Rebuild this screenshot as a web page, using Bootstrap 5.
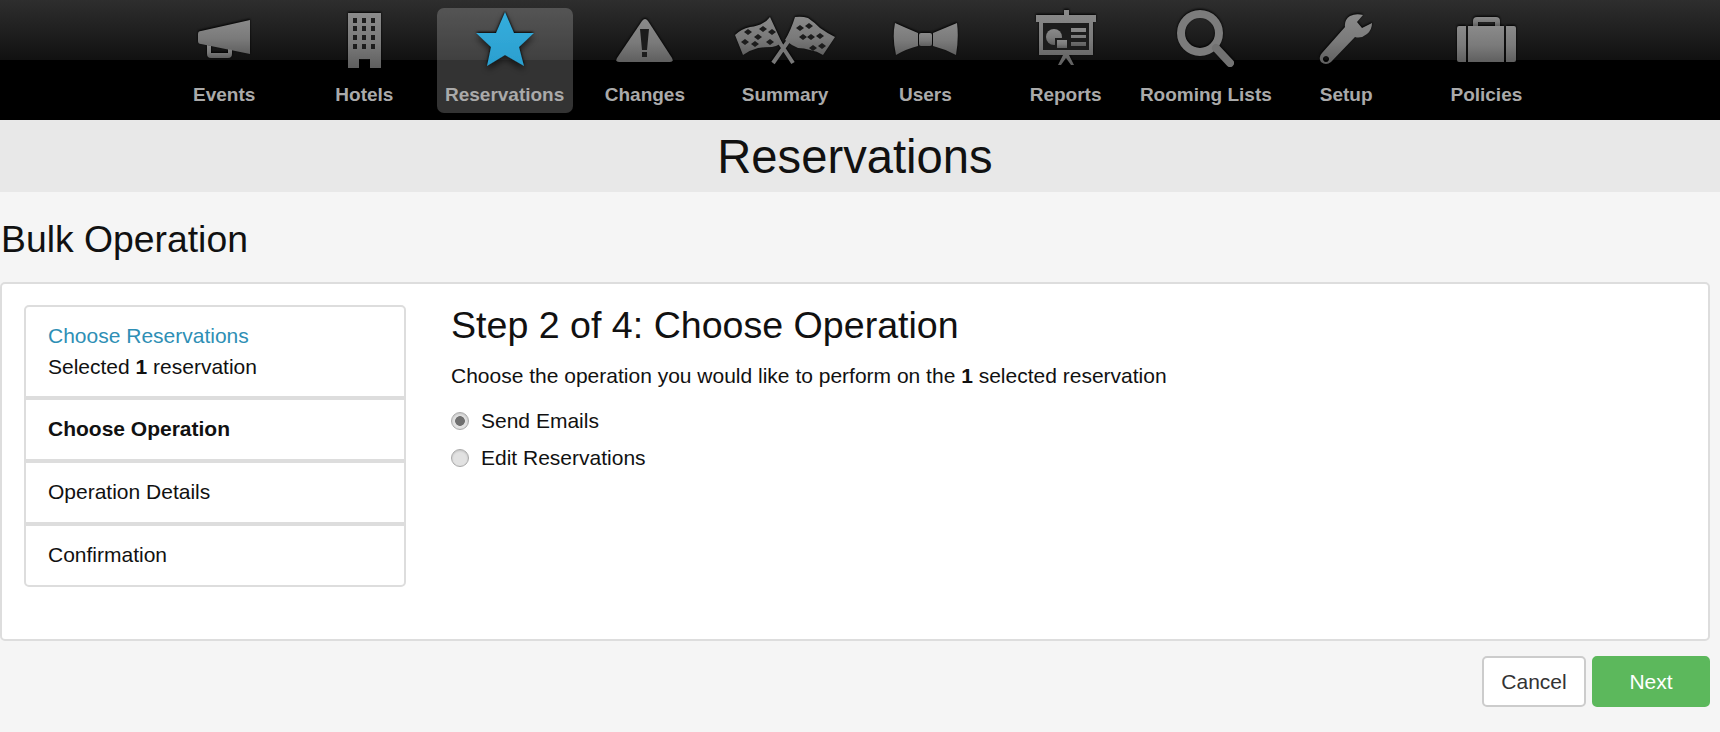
<!DOCTYPE html>
<html lang="en">
<head>
<meta charset="utf-8">
<title>Reservations</title>
<link rel="stylesheet" href="https://cdn.jsdelivr.net/npm/bootstrap@5.3.0/dist/css/bootstrap.min.css">
<script src="https://cdn.jsdelivr.net/npm/bootstrap@5.3.0/dist/js/bootstrap.bundle.min.js"></script>
<style>
html,body{height:732px;overflow:hidden}
body{background:#f5f5f5;color:#111;font-family:"Liberation Sans",Arial,sans-serif;font-size:21px;line-height:30.67px}
.top-nav{height:120px;background:linear-gradient(#2e2e2e 0,#111 60px,#000 60px);padding-left:154px}
.top-link{width:136.25px;height:105px;margin:8px 2px 0;border-radius:7px;color:#aaa;font-size:19px;font-weight:700;text-decoration:none;text-align:center;display:block}
.top-link.is-on{background:rgba(255,255,255,.2)}
.top-link svg{display:block;width:136px;height:72px;filter:blur(.4px) drop-shadow(0 -1px 1px #000);overflow:visible}
.top-link span{display:block;line-height:30px}
.ig{fill:url(#gi)}
.hole{fill:#1c1c1c}
.title-band{height:72px;background:#e8e8e8;padding:1px 10px 0 0;text-align:center;font-size:47.2px;line-height:71px}
.body-wrap{width:1710px}
.page-head{font-size:37.33px;line-height:40px;margin:27px 0 23px 1px;font-weight:400}
.wiz-card{border:2px solid #ddd;border-radius:5px;background:#fff;height:359px;padding:21px 22px}
.wiz-steps{width:382px;flex:none;border:2px solid #ddd;border-radius:5px;align-self:flex-start;background:#fff}
.wiz-steps .list-group-item{border:0;border-bottom:4px solid #ddd;padding:14px 22px;background:transparent;color:#111}
.wiz-steps .list-group-item:last-child{border-bottom:0;padding-bottom:15px}
.done-link{color:#2e8fb5;text-decoration:none;display:block}
.wiz-main{margin-left:45px}
.wiz-title{font-size:37.6px;line-height:40px;margin:0 0 16px;font-weight:400}
.wiz-text{margin:0 0 11px}
.wiz-radio{display:flex;align-items:center;min-height:37px;margin:0;padding:0}
.wiz-radio .form-check-input{float:none;width:18px;height:18px;margin:0 12px 0 0;border:1px solid #aaa;background:#e2e2e2;box-shadow:inset 0 1px 2px rgba(0,0,0,.15)}
.wiz-radio .form-check-input:checked{background:radial-gradient(circle,#707070 0 4.5px,#e2e2e2 5.2px);border-color:#aaa}
.foot-btn{font-size:21px;height:51px;border-radius:5px;line-height:1.3}
.btn-cancel{width:104px;background:#fff;border:2px solid #ccc;color:#333}
.btn-next{width:118px;background:#5cb85c;border:2px solid #5cb85c;color:#fff;margin-left:6px}
.foot-row{margin-top:15px}
</style>
</head>
<body>
<nav class="top-nav d-flex">
  <a class="top-link" href="#"><svg viewBox="-68 8 136 72"><defs><linearGradient id="gi" x1="0" y1="0" x2="0" y2="1"><stop offset="0" stop-color="#8a8a8a"/><stop offset=".55" stop-color="#7a7a7a"/><stop offset="1" stop-color="#5f5f5f"/></linearGradient></defs>
    <path class="ig" d="M-26 34Q-26 31-23 31L26 20V54L-23 44Q-26 44-26 41Z"/><path class="ig" d="M-17 45V54Q-17 58-13 58H4Q8 58 8 54V50L4 49V53H-13V46Z"/></svg><span>Events</span></a>
  <a class="top-link" href="#"><svg viewBox="-68 8 136 72">
    <path class="ig" d="M-16 13H17V68H6V59H-5V68H-16Z"/>
    <path class="hole" d="M-11 18h4v5h-4zM-2 18h4v5h-4zM7 18h4v5h-4zM-11 26h4v5h-4zM-2 26h4v5h-4zM7 26h4v5h-4zM-11 35h4v5h-4zM-2 35h4v5h-4zM7 35h4v5h-4zM-11 44h4v5h-4zM-2 44h4v5h-4zM7 44h4v5h-4z"/></svg><span>Hotels</span></a>
  <a class="top-link is-on" href="#"><svg viewBox="-68 8 136 72">
    <defs><linearGradient id="gs" x1="0" y1="0" x2="0" y2="1"><stop offset="0" stop-color="#35aedd"/><stop offset="1" stop-color="#2b9fcf"/></linearGradient><filter id="fs" x="-30%" y="-30%" width="160%" height="170%"><feDropShadow dx="0" dy="4" stdDeviation="3" flood-color="#000" flood-opacity=".35"/></filter></defs>
    <path fill="url(#gs)" filter="url(#fs)" d="M0 12L9 33H29L14 47L19 66L0 55L-18 66L-14 47L-29 33H-9Z"/></svg><span>Reservations</span></a>
  <a class="top-link" href="#"><svg viewBox="-68 8 136 72">
    <path class="ig" d="M-3 21Q0 17 3 21L27 58Q29 62 25 62H-26Q-30 62-28 58Z"/>
    <path class="hole" d="M-5 29H4L2 50H-3ZM-3 52H2V57H-3Z"/></svg><span>Changes</span></a>
  <a class="top-link" href="#"><svg viewBox="-68 8 136 72">
    <path d="M-12 63L4 40M8 63L-7 40" stroke="#777" stroke-width="4" fill="none"/>
    <path class="ig" d="M-50 35Q-44 29-35 27Q-27 26-22 23Q-18 21-15 17L-3 43Q-8 46-13 47Q-20 47-27 48Q-35 50-42 55Z"/>
    <path class="ig" d="M0 40Q6 30 10 17Q17 16 23 18Q29 22 35 28Q42 33 50 37Q44 46 38 55Q32 51 25 50Q19 48 13 48Q6 45 0 40Z"/>
    <path class="hole" d="M-41 32l4-3 4 3-4 3zM-26 29l4-3 4 3-4 3zM-17 32l4-3 4 3-4 3zM-31 37l4-3 4 3-4 3zM-44 42l4-3 4 3-4 3zM-19 42l4-3 4 3-4 3zM-34 44l4-3 4 3-4 3z"/>
    <path class="hole" d="M11 28l4-3 4 3-4 3zM20 26l4-3 4 3-4 3zM14 37l4-3 4 3-4 3zM22 37l4-3 4 3-4 3zM31 36l4-3 4 3-4 3zM24 48l4-3 4 3-4 3zM33 46l4-3 4 3-4 3z"/></svg><span>Summary</span></a>
  <a class="top-link" href="#"><svg viewBox="-68 8 136 72">
    <path class="ig" d="M-30 23Q-19 28-7 33V46Q-19 49-29 55Q-33 38-30 23Z"/>
    <path class="ig" d="M32 23Q20 28 8 33V46Q20 49 31 55Q34 38 32 23Z"/>
    <rect class="ig" x="-6" y="33" width="13" height="13" rx="2"/></svg><span>Users</span></a>
  <a class="top-link" href="#"><svg viewBox="-68 8 136 72">
    <path class="ig" d="M-2 10H3V15H30V22H27V55H3L8 65H5L0 58L-5 65H-8L-3 55H-27V22H-30V15H-2Z"/>
    <path class="hole" d="M-23 23H23V50H-23Z"/>
    <circle class="ig" cx="-12" cy="37" r="8"/><path class="hole" d="M-11 38H2V49H-11Z"/><path class="ig" d="M-9 40H1V48H-9Z"/>
    <path class="ig" d="M5 28H20V32H5ZM5 35H20V38H5ZM5 42H20V46H5Z"/></svg><span>Reports</span></a>
  <a class="top-link" href="#"><svg viewBox="-68 8 136 72">
    <circle cx="-6" cy="33" r="19" fill="none" stroke="#7c7c7c" stroke-width="8"/>
    <path d="M10 48L24 63" stroke="#727272" stroke-width="8" stroke-linecap="round" fill="none"/></svg><span>Rooming Lists</span></a>
  <a class="top-link" href="#"><svg viewBox="-68 8 136 72">
    <path class="ig" fill-rule="evenodd" d="M-1 27Q-2 20 4 16Q10 13 17 15L11 22L16 28L26 23Q26 30 21 34Q15 39 9 37L-15 62Q-20 66-25 62Q-28 57-24 53ZM-20 56a3 3 0 1 0 .01 0Z"/></svg><span>Setup</span></a>
  <a class="top-link" href="#"><svg viewBox="-68 8 136 72">
    <path class="ig" fill-rule="evenodd" d="M-13 26V21Q-13 17-9 17H10Q14 17 14 21V26ZM-8 26H9V22H-8Z"/>
    <path class="ig" d="M-29 28Q-29 26-27 26H-20V62H-27Q-29 62-29 60ZM-18 26H18V62H-18ZM20 26H28Q30 26 30 28V60Q30 62 28 62H20Z"/></svg><span>Policies</span></a>
</nav>
<div class="title-band">Reservations</div>
<main class="body-wrap">
  <h1 class="page-head">Bulk Operation</h1>
  <section class="wiz-card d-flex">
    <div class="wiz-steps list-group">
      <div class="list-group-item"><a class="done-link" href="#">Choose Reservations</a>Selected <b>1</b> reservation</div>
      <div class="list-group-item"><b>Choose Operation</b></div>
      <div class="list-group-item">Operation Details</div>
      <div class="list-group-item">Confirmation</div>
    </div>
    <div class="wiz-main">
      <h2 class="wiz-title">Step 2 of 4: Choose Operation</h2>
      <p class="wiz-text">Choose the operation you would like to perform on the <b>1</b> selected reservation</p>
      <label class="wiz-radio"><input class="form-check-input" type="radio" name="op" checked>Send Emails</label>
      <label class="wiz-radio"><input class="form-check-input" type="radio" name="op">Edit Reservations</label>
    </div>
  </section>
  <div class="foot-row d-flex justify-content-end">
    <button class="btn foot-btn btn-cancel" type="button">Cancel</button>
    <button class="btn foot-btn btn-next" type="button">Next</button>
  </div>
</main>
</body>
</html>
